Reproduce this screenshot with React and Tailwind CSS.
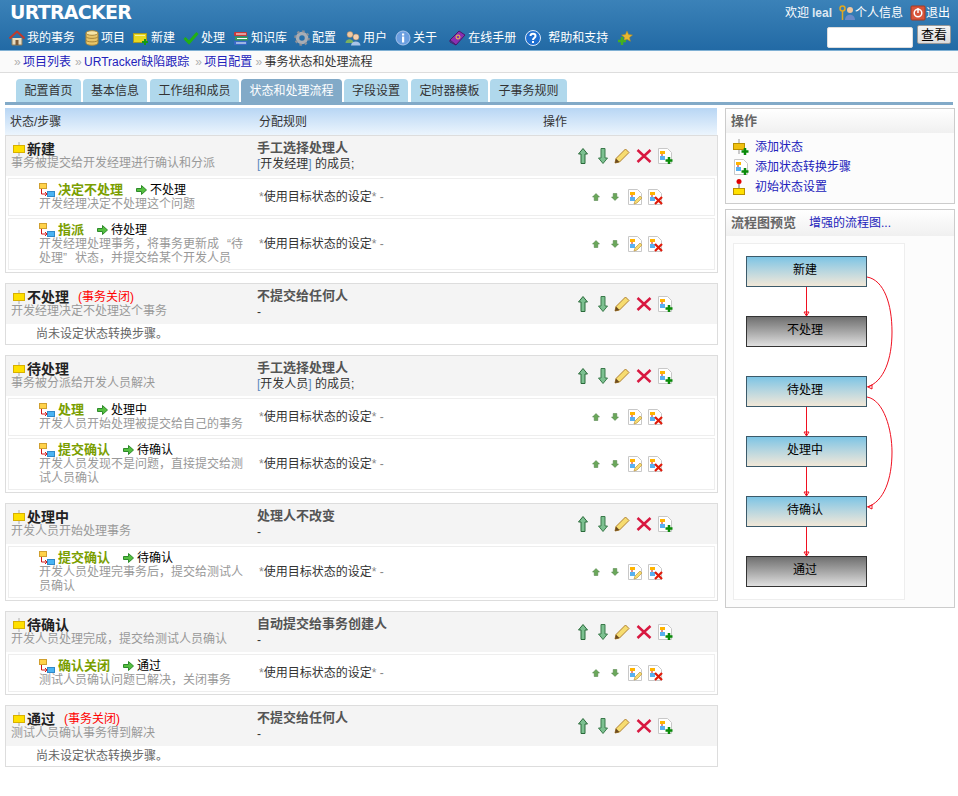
import React from "react";

// --- small drawn icons ---
const Svg = ({ w = 16, h = 16, children, className = "" }) => (
  <svg width={w} height={h} viewBox={`0 0 ${w} ${h}`} className={`shrink-0 ${className}`}>
    {children}
  </svg>
);

const HomeIcon = () => (
  <Svg>
    <path d="M3 8v7h10V8" fill="#e8dcc0" stroke="#8a7a5a" />
    <path d="M0.5 8.5 8 1.5l7.5 7" fill="none" stroke="#c0392b" strokeWidth="2" />
    <rect x="6.5" y="10" width="3" height="5" fill="#7a5a3a" />
  </Svg>
);
const DbIcon = () => (
  <Svg w={14}>
    <path d="M1 3v10c0 3 12 3 12 0V3z" fill="#e8c66a" stroke="#a8863a" />
    <ellipse cx="7" cy="3" rx="6" ry="2.3" fill="#f6e6a8" stroke="#a8863a" />
    <path d="M1 6.5c0 2.5 12 2.5 12 0M1 10c0 2.5 12 2.5 12 0" fill="none" stroke="#a8863a" />
  </Svg>
);
const NewIcon = () => (
  <Svg>
    <rect x="0.5" y="3.5" width="13" height="9" fill="#e8d820" stroke="#a89a20" />
    <path d="M2 5.5h10" stroke="#f6f0a0" />
    <path d="M12 9v6M9 12h6" stroke="#159a15" strokeWidth="2" />
  </Svg>
);
const CheckIcon = () => (
  <Svg>
    <path d="M1.5 8 6 12.5 14.5 3" fill="none" stroke="#22b014" strokeWidth="3" />
  </Svg>
);
const BooksIcon = () => (
  <Svg>
    <rect x="1" y="2" width="13" height="4" rx="1" fill="#c83a3a" />
    <rect x="2" y="6.5" width="13" height="4" rx="1" fill="#3a9a5a" />
    <rect x="1" y="11" width="13" height="4" rx="1" fill="#3a6ac8" />
    <path d="M3 4h10M4 8.500h10M3 13h10" stroke="#fff" />
  </Svg>
);
const GearIcon = () => (
  <Svg>
    <circle cx="8" cy="8" r="4.500" fill="none" stroke="#a8adb5" strokeWidth="3.500" />
    <circle cx="8" cy="8" r="6.800" fill="none" stroke="#8a8f98" strokeWidth="2" strokeDasharray="2.500 2.840" />
  </Svg>
);
const UsersIcon = () => (
  <Svg>
    <circle cx="5" cy="4.500" r="3" fill="#f0c8a0" stroke="#a08060" strokeWidth="0.500" />
    <path d="M0.500 13c0-5 8-5 8 0z" fill="#7ab060" />
    <circle cx="11" cy="7" r="3" fill="#f4d0b0" stroke="#a08060" strokeWidth="0.500" />
    <path d="M6 15.500c0-5.500 9.500-5.500 9.500 0z" fill="#a8c4e8" />
  </Svg>
);
const InfoIcon = () => (
  <Svg>
    <circle cx="8" cy="8" r="7" fill="#6a9ee0" stroke="#a8c4ec" />
    <rect x="7" y="6.500" width="2.200" height="6" fill="#fff" />
    <rect x="7" y="3.500" width="2.200" height="2" fill="#fff" />
  </Svg>
);
const ManualIcon = () => (
  <Svg w={17}>
    <path d="M1 10 10 1l6 4-9 10z" fill="#8a2fb0" stroke="#4a1a68" />
    <path d="M1 10v2l6 3" fill="none" stroke="#4a1a68" />
    <circle cx="9" cy="7" r="2" fill="none" stroke="#f0d040" />
  </Svg>
);
const HelpIcon = () => (
  <Svg>
    <circle cx="8" cy="8" r="7.500" fill="#1f6fd0" stroke="#dfeaf8" />
    <path d="M5.500 6c0-3 5-3 5 0 0 2-2.500 2-2.500 4" fill="none" stroke="#fff" strokeWidth="2" />
    <rect x="7" y="11" width="2" height="2" fill="#fff" />
  </Svg>
);
const StarPlusIcon = () => (
  <Svg>
    <path d="m10 1 1.600 3.600 3.900.4-3 2.500.9 3.800-3.400-2-3.400 2 .9-3.800-3-2.500 3.900-.4z" fill="#e8b830" stroke="#b08820" strokeWidth="0.500" />
    <path d="M5 7v8M1 11h8" stroke="#46b020" strokeWidth="2.500" />
  </Svg>
);
const KeysIcon = () => (
  <Svg>
    <circle cx="3.500" cy="3.500" r="2.500" fill="none" stroke="#e0a820" strokeWidth="1.500" />
    <path d="M3.500 6v9" stroke="#e0a820" strokeWidth="1.500" />
    <circle cx="11" cy="5" r="3" fill="#f0c8a0" />
    <path d="M6 15c0-7 10-7 10 0z" fill="#6a8ac8" />
  </Svg>
);
const PowerIcon = () => (
  <Svg>
    <rect x="1" y="1" width="14" height="14" rx="1" fill="#d8553a" stroke="#a83a20" />
    <circle cx="8" cy="8" r="3.800" fill="none" stroke="#fff" strokeWidth="1.500" />
    <path d="M8 3v5" stroke="#fff" strokeWidth="1.500" />
  </Svg>
);

const StateIcon = () => (
  <Svg w={12} h={14}>
    <path d="M6 0v14" stroke="#c4c4c4" strokeWidth="1.500" />
    <rect x="0.500" y="3.500" width="11" height="7" fill="#ffe000" stroke="#d8b000" />
  </Svg>
);
const StepIcon = () => (
  <Svg h={14}>
    <rect x="0.500" y="0.500" width="7" height="5" fill="#ffd24a" stroke="#d0a030" />
    <rect x="8.500" y="8.500" width="7" height="5" fill="#4ab4f4" stroke="#3088c8" />
    <path d="M2.500 6v5H7" fill="none" stroke="#d01818" />
    <path d="m6 9 2 2-2 2" fill="none" stroke="#d01818" />
  </Svg>
);
const GoArrow = () => (
  <Svg w={11} h={10}>
    <path d="M0.500 3.500h5V0.500l5 4.500-5 4.500v-3h-5z" fill="#55c040" stroke="#2e8a2a" />
  </Svg>
);
const BigUp = () => (
  <Svg w={10} h={16}>
    <path d="M5 0.500 9.500 6H7v9.500H3V6H0.500z" fill="#7cc090" stroke="#2a6a3a" />
  </Svg>
);
const BigDown = () => (
  <Svg w={10} h={16}>
    <path d="M5 15.500 9.500 10H7V0.500H3V10H0.500z" fill="#7cc090" stroke="#3a7a4a" />
  </Svg>
);
const SmallUp = () => (
  <Svg w={8} h={8}>
    <path d="M4 0.500 7.500 4H5.800v3.500H2.200V4H0.500z" fill="#6aa85a" stroke="#4a7a40" strokeWidth="0.500" />
  </Svg>
);
const SmallDown = () => (
  <Svg w={8} h={8}>
    <path d="M4 7.500 7.500 4H5.800V0.500H2.200V4H0.500z" fill="#6aa85a" stroke="#4a7a40" strokeWidth="0.500" />
  </Svg>
);
const Pencil = () => (
  <Svg>
    <path d="M1 15l1-4.500L11.500 1l3.500 3.500L5.500 14z" fill="#f6dc70" stroke="#b08030" />
    <path d="M1 15l1-4.500L5.500 14z" fill="#6a4a20" />
  </Svg>
);
const BigX = () => (
  <Svg>
    <path d="M1.500 2 14.500 14M14.500 2 1.500 14" stroke="#d81840" strokeWidth="2.500" />
  </Svg>
);
const Doc = ({ children }) => (
  <Svg>
    <path d="M1.500 0.500h9l4 4v11h-13z" fill="#fff" stroke="#c8c8c8" />
    <rect x="3" y="3" width="5" height="3" fill="#ffb400" />
    <path d="M5 6v2" stroke="#c01818" />
    <rect x="3" y="8" width="5" height="4" fill="#58b0f0" />
    {children}
  </Svg>
);
const DocAdd = () => (
  <Doc>
    <path d="M12 9v7M8.500 12.500h7" stroke="#0a8a0a" strokeWidth="2.500" />
  </Doc>
);
const DocEdit = () => (
  <Doc>
    <path d="M7 15l1-3 5-5 2 2-5 5z" fill="#f6dc70" stroke="#c09840" strokeWidth="0.700" />
  </Doc>
);
const DocDel = () => (
  <Doc>
    <path d="m8 8 7 7M15 8l-7 7" stroke="#e01a0a" strokeWidth="2.200" />
  </Doc>
);
const AddStateIcon = () => (
  <Svg w={16} h={16}>
    <path d="M6 0v15" stroke="#b8b8b8" strokeWidth="1.500" />
    <rect x="0.500" y="4.500" width="11" height="6" fill="#f0c010" stroke="#b89000" />
    <path d="M12 9v7M8.500 12.500h7" stroke="#0a8a0a" strokeWidth="2.500" />
  </Svg>
);
const InitIcon = () => (
  <Svg w={12} h={16}>
    <circle cx="6" cy="2.500" r="2.500" fill="#e00000" />
    <path d="M6 5v4" stroke="#999" strokeWidth="1.500" />
    <rect x="0.500" y="9.500" width="11" height="6" fill="#ffe000" stroke="#b89000" />
  </Svg>
);

// --- data ---
const nav = [
  [<HomeIcon />, "我的事务", "ml-0"],
  [<DbIcon />, "项目", "ml-[10px]"],
  [<NewIcon />, "新建", "ml-[8px]"],
  [<CheckIcon />, "处理", "ml-[8px]"],
  [<BooksIcon />, "知识库", "ml-[8px]"],
  [<GearIcon />, "配置", "ml-[7px]"],
  [<UsersIcon />, "用户", "ml-[9px]"],
  [<InfoIcon />, "关于", "ml-[8px]"],
  [<ManualIcon />, "在线手册", "ml-[12px]"],
];

const tabs = [
  ["配置首页", "w-[65px]", "ml-0"],
  ["基本信息", "w-[64px]", "ml-[2px]"],
  ["工作组和成员", "w-[89px]", "ml-[3px]"],
  ["状态和处理流程", "w-[101px]", "ml-[2px]"],
  ["字段设置", "w-[64px]", "ml-[2px]"],
  ["定时器模板", "w-[77px]", "ml-[3px]"],
  ["子事务规则", "w-[77px]", "ml-[2px]"],
];

const states = [
  {
    name: "新建",
    desc: "事务被提交给开发经理进行确认和分派",
    rule: "手工选择处理人",
    members: "开发经理",
    steps: [
      { name: "决定不处理", to: "不处理", desc: "开发经理决定不处理这个问题" },
      {
        name: "指派",
        to: "待处理",
        desc: (
          <>
            开发经理处理事务，将事务更新成<span className="pl-[8px]">“</span>待处理<span className="pr-[8px]">”</span>状态，并提交给某个开发人员
          </>
        ),
      },
    ],
  },
  {
    name: "不处理",
    closed: true,
    desc: "开发经理决定不处理这个事务",
    rule: "不提交给任何人",
    steps: [],
  },
  {
    name: "待处理",
    desc: "事务被分派给开发人员解决",
    rule: "手工选择处理人",
    members: "开发人员",
    steps: [
      { name: "处理", to: "处理中", desc: "开发人员开始处理被提交给自己的事务" },
      { name: "提交确认", to: "待确认", desc: "开发人员发现不是问题，直接提交给测试人员确认" },
    ],
  },
  {
    name: "处理中",
    desc: "开发人员开始处理事务",
    rule: "处理人不改变",
    steps: [{ name: "提交确认", to: "待确认", desc: "开发人员处理完事务后，提交给测试人员确认" }],
  },
  {
    name: "待确认",
    desc: "开发人员处理完成，提交给测试人员确认",
    rule: "自动提交给事务创建人",
    steps: [{ name: "确认关闭", to: "通过", desc: "测试人员确认问题已解决，关闭事务" }],
  },
  {
    name: "通过",
    closed: true,
    desc: "测试人员确认事务得到解决",
    rule: "不提交给任何人",
    steps: [],
  },
];

const flowNodes = [
  ["新建", "blue", "top-[12px]"],
  ["不处理", "gray", "top-[72px]"],
  ["待处理", "blue", "top-[132px]"],
  ["处理中", "blue", "top-[192px]"],
  ["待确认", "blue", "top-[252px]"],
  ["通过", "gray", "top-[312px]"],
];

const Step = ({ step }) => (
  <div className="flex items-center border border-[#eeeeee] py-[4px]">
    <div className="w-[250px] shrink-0 pl-[30px] pr-[10px] leading-[14px]">
      <div className="flex h-[14px] items-center">
        <StepIcon />
        <span className="ml-[3px] text-[13px] font-bold text-[#7a9e00]">{step.name}</span>
        <span className="ml-[13px]"><GoArrow /></span>
        <span className="ml-[3px] text-black">{step.to}</span>
      </div>
      <div className="text-[#999999]">{step.desc}</div>
    </div>
    <div className="flex-1 text-[#333333]">
      <span className="text-[#888888]">*</span>使用目标状态的设定<span className="text-[#888888]">* -</span>
    </div>
    <div className="mr-[51px] flex items-center">
      <SmallUp />
      <span className="ml-[11px]"><SmallDown /></span>
      <span className="ml-[8px]"><DocEdit /></span>
      <span className="ml-[4px]"><DocDel /></span>
    </div>
  </div>
);

const StateBlock = ({ state }) => (
  <div className="border border-[#dddddd]">
    <div className="flex h-[40px] items-center bg-[#f4f4f4]">
      <div className="w-[251px] shrink-0 pl-[5px] leading-[14px]">
        <div className="flex h-[14px] items-center pl-[2px]">
          <StateIcon />
          <span className="ml-[2px] text-[14px] font-bold text-[#222222]">{state.name}</span>
          {state.closed && <span className="ml-[9px] text-[#ff0000]">(事务关闭)</span>}
        </div>
        <div className="text-[#999999]">{state.desc}</div>
      </div>
      <div className="flex-1 leading-[16px] text-[#333333]">
        <div className="text-[13px] font-bold text-[#555555]">{state.rule}</div>
        {state.members ? (
          <div>
            <span className="text-[#5a8ac0]">[</span>{state.members}<span className="text-[#5a8ac0]">]</span> 的成员;
          </div>
        ) : (
          <div>-</div>
        )}
      </div>
      <div className="mr-[44px] flex items-center">
        <BigUp />
        <span className="ml-[10px]"><BigDown /></span>
        <span className="ml-[6px]"><Pencil /></span>
        <span className="ml-[6px]"><BigX /></span>
        <span className="ml-[5px]"><DocAdd /></span>
      </div>
    </div>
    {state.steps.length > 0 ? (
      <div className="flex flex-col gap-[2px] p-[2px]">
        {state.steps.map((s) => (
          <Step key={s.name} step={s} />
        ))}
      </div>
    ) : (
      <div className="flex h-[20px] items-center pl-[30px] text-[#666666]">尚未设定状态转换步骤。</div>
    )}
  </div>
);

export default function App() {
  return (
    <div className="min-h-[796px] bg-white text-[12px] text-[#333333] [font-family:'Liberation_Sans','Noto_Sans_CJK_SC',sans-serif]">
      {/* header */}
      <div className="h-[51px] border-b border-[#7fb0d4] bg-gradient-to-b from-[#3b82b8] to-[#226aa5] text-white">
        <div className="flex h-[25px] items-center justify-between pl-[10px] pr-[8px]">
          <span className="text-[19px] font-black leading-none tracking-[-0.750px] [font-family:'DejaVu_Sans',sans-serif]">URTRACKER</span>
          <div className="flex items-center">
            <span>欢迎</span>
            <span className="ml-[3px] font-bold text-[#dde8f2]">leal</span>
            <span className="ml-[7px]"><KeysIcon /></span>
            <span>个人信息</span>
            <span className="ml-[7px]"><PowerIcon /></span>
            <span>退出</span>
          </div>
        </div>
        <div className="flex h-[25px] items-center pl-[9px] pr-[7px]">
          {nav.map(([icon, label, ml]) => (
            <div key={label} className={`flex items-center gap-[2px] ${ml}`}>
              {icon}
              <span>{label}</span>
            </div>
          ))}
          <span className="ml-[9px]"><HelpIcon /></span>
          <span className="ml-[7px]">帮助和支持</span>
          <span className="ml-[9px]"><StarPlusIcon /></span>
          <input className="ml-auto h-[21px] w-[86px] rounded-[2px] border border-[#dddddd] bg-white" />
          <button className="ml-[4px] h-[19px] w-[34px] self-start rounded-[2px] border border-[#999999] bg-gradient-to-b from-[#f4f4f4] to-[#dcdcdc] text-[13px] leading-none text-black">查看</button>
        </div>
      </div>

      {/* breadcrumb */}
      <div className="flex h-[22px] items-center border-b border-[#dddddd] bg-[#fafafa] pl-[14px] text-[#2222bb]">
        <span className="w-[9px] text-[#b0b0b0]">»</span>
        <span>项目列表</span>
        <span className="ml-[4px] w-[9px] text-[#b0b0b0]">»</span>
        <span>URTracker缺陷跟踪</span>
        <span className="ml-[6px] w-[9px] text-[#b0b0b0]">»</span>
        <span>项目配置</span>
        <span className="ml-[3px] w-[9px] text-[#b0b0b0]">»</span>
        <span className="text-[#333333]">事务状态和处理流程</span>
      </div>

      {/* tabs */}
      <div className="mx-[5px] mt-[6px] flex h-[26px] items-end border-b-[3px] border-[#82aac8] pl-[11px]">
        {tabs.map(([label, w, ml], i) => (
          <div
            key={label}
            className={`flex h-[23px] items-center justify-center rounded-t-[4px] ${w} ${ml} ${i === 3 ? "bg-[#82aac8] text-white" : "bg-[#b0d8ec] text-[#333333]"}`}
          >
            {label}
          </div>
        ))}
      </div>

      <div className="mt-[3px] flex items-start pl-[5px]">
        {/* state table */}
        <div className="w-[713px] shrink-0">
          <div className="flex h-[27px] w-[712px] items-center bg-gradient-to-b from-[#b8d6f4] to-[#ecf5fd] pl-[5px]">
            <span className="w-[249px]">状态/步骤</span>
            <span className="w-[284px]">分配规则</span>
            <span>操作</span>
          </div>
          <div className="flex flex-col gap-[10px]">
            {states.map((s) => (
              <StateBlock key={s.name} state={s} />
            ))}
          </div>
        </div>

        {/* right panels */}
        <div className="ml-[7px] flex w-[230px] shrink-0 flex-col gap-[5px]">
          <div className="h-[96px] border border-[#cccccc] bg-[#fcfcfc]">
            <div className="flex h-[24px] items-center bg-gradient-to-b from-white to-[#f0f0f0] pl-[5px] text-[13px] font-bold text-[#666666]">操作</div>
            <div className="flex flex-col gap-[4px] pl-[7px] pt-[6px] leading-[16px] text-[#2222bb]">
              <div className="flex items-center"><span className="w-[22px]"><AddStateIcon /></span>添加状态</div>
              <div className="flex items-center"><span className="w-[22px]"><DocAdd /></span>添加状态转换步骤</div>
              <div className="flex items-center"><span className="w-[22px]"><InitIcon /></span>初始状态设置</div>
            </div>
          </div>
          <div className="h-[399px] border border-[#cccccc] bg-[#fcfcfc]">
            <div className="flex h-[26px] items-center bg-gradient-to-b from-white to-[#f0f0f0] pl-[5px]">
              <span className="text-[13px] font-bold text-[#666666]">流程图预览</span>
              <span className="ml-[13px] text-[#2222bb]">增强的流程图...</span>
            </div>
            <div className="relative ml-[7px] mt-[7px] h-[357px] w-[172px] border border-[#eeeeee] bg-white">
              {flowNodes.map(([label, tone, top]) => (
                <div
                  key={label}
                  className={`absolute left-[12px] flex h-[31px] w-[121px] items-center justify-center border pb-[3px] pr-[3px] text-black ${top} ${tone === "blue" ? "border-[#3c5a6a] bg-gradient-to-b from-[#7cc4e4] to-[#f2e8d8]" : "border-[#333333] bg-gradient-to-b from-[#707070] to-[#e0e0e0]"}`}
                >
                  {label}
                </div>
              ))}
              <svg width="170" height="355" className="absolute left-0 top-0" fill="none" stroke="#f01020">
                <path d="M72.500 43v29M72.500 163v29M72.500 223v29M72.500 283v29" />
                <path d="M70 68h5l-2.500 4zM70 188h5l-2.500 4zM70 248h5l-2.500 4zM70 308h5l-2.500 4z" />
                <path d="M133 33C150 36 158 60 158 88 158 115 150 138 133 143" />
                <path d="M133 153C150 156 158 186 158 208 158 235 150 258 133 263" />
                <path d="M134 143l4-2v4zM134 263l4-2v4z" />
              </svg>
            </div>
          </div>
        </div>
      </div>
    </div>
  );
}
